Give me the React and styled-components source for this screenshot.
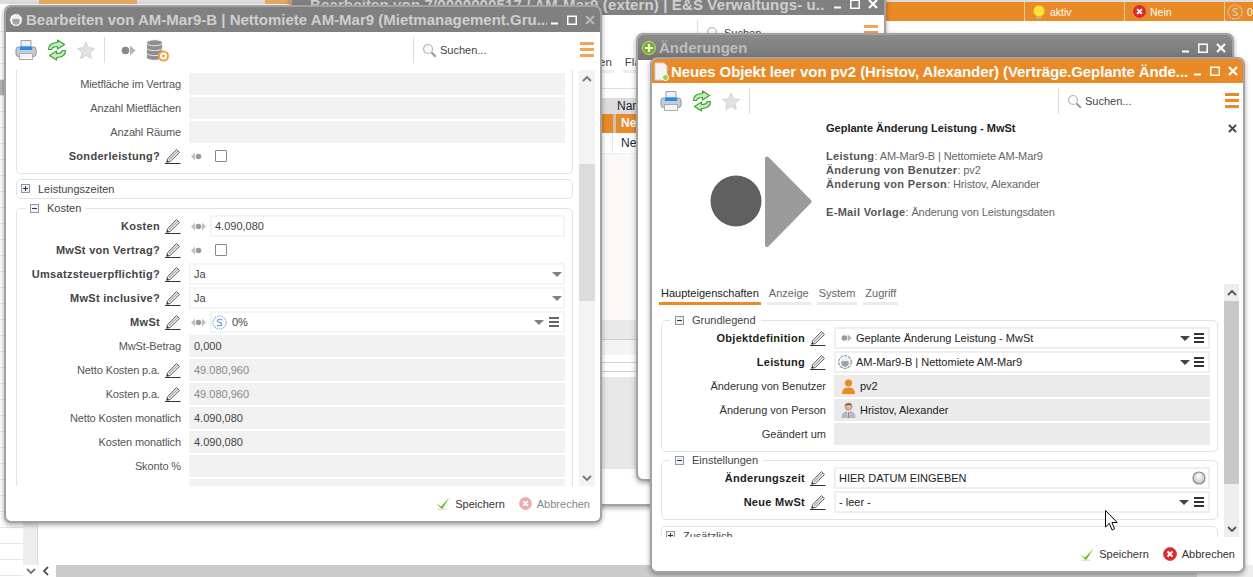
import React from "react";
import styled, { createGlobalStyle } from "styled-components";

const Global = createGlobalStyle`
  html, body { margin: 0; padding: 0; background: #fff; overflow: hidden; }
  * { box-sizing: border-box; }
  svg { flex: none; display: block; }
  body { font-family: "Liberation Sans", Arial, sans-serif; font-size: 11px; }
`;

const ORANGE = "#e98a26";

const Desktop = styled.div`
  position: relative; width: 1253px; height: 577px; overflow: hidden; background: #fff;
`;

/* ---------- page behind the windows ---------- */
const Backdrop = styled.div`display: flex; flex-direction: column; width: 100%; height: 100%;`;
const TopBand = styled.div`display: flex; height: 21px; flex: none;`;
const TopTab = styled.div`
  width: ${p => p.$w}px; flex: none; height: ${p => p.$h || 4}px; background: ${p => p.$bg};
`;
const StatusBar = styled.div`
  flex: 1; height: 19px; margin-top: 2px; background: ${ORANGE}; display: flex; padding-left: 138px;
  box-shadow: 0 -2px 0 #ddd;
`;
const StatusCell = styled.div`
  width: 100px; flex: none; border-left: 1px solid #f6cfa3; display: flex; align-items: center;
  gap: ${p => p.$gap ?? 5}px; padding-left: ${p => p.$pl ?? 8}px; color: #fff; font-size: 10.5px; white-space: nowrap; overflow: hidden;
`;
const MainRow = styled.div`flex: 1; display: flex; min-height: 0;`;
const LeftRail = styled.div`width: 23px; flex: none; overflow: hidden;`;
const RailRow = styled.div`
  height: 16px; border-bottom: 1px solid #e6e6e6; background: ${p => (p.$on ? "#b5b5b5" : "#fff")};
  &:first-child { height: 11px; }
`;
const Strip = styled.div`width: 15px; flex: none; display: flex; flex-direction: column;`;
const StripFill = styled.div`flex: 1; background: #eee; border-right: 1px solid #ddd;`;
const ChevSlot = styled.div`height: 12px; flex: none; display: flex; align-items: center; justify-content: center;`;
const Content = styled.div`flex: 1; display: flex; flex-direction: column; min-width: 0;`;
const ContentFill = styled.div`flex: 1;`;
const HScroll = styled.div`height: 12px; flex: none; display: flex; align-items: center;`;
const HChev = styled.div`width: 18px; flex: none; display: flex; justify-content: center;`;
const HThumb = styled.div`flex: 1; height: 100%; background: #ccc;`;
const HEnd = styled.div`width: 56px; flex: none; height: 100%; background: #eee;`;

/* ---------- windows ---------- */
const Win = styled.section`
  position: absolute; left: ${p => p.$x}px; top: ${p => p.$y}px; width: ${p => p.$w}px; height: ${p => p.$h}px;
  background: #fff; border: 2px solid #a3a3a3; border-radius: 7px; overflow: hidden;
  box-shadow: 0 2px 5px rgba(0,0,0,.35);
  display: flex; flex-direction: column;
  --lbl: ${p => (p.$active ? "#333" : "#555")};
  --lblsp: ${p => (p.$active ? "0" : "-.12px")};
  --strong: ${p => (p.$active ? "#1c1c1c" : "#444")};
  --ro: ${p => (p.$active ? "#ebebeb" : "#f2f2f2")};
  --edge: ${p => (p.$active ? "#efefef" : "#f4f4f4")};
  --val: ${p => (p.$active ? "#222" : "#444")};
  --tri: ${p => (p.$active ? "#444" : "#808080")};
  --bars: ${p => (p.$active ? "#333" : "#666")};
  --menu: ${p => (p.$active ? ORANGE : "#f0a55a")};
  --track: ${p => (p.$active ? "#eee" : "#f3f3f3")};
  --thumb: ${p => (p.$active ? "#c8c8c8" : "#dcdcdc")};
`;
const Title = styled.header`
  height: ${p => p.$h}px; flex: none; display: flex; align-items: center; gap: ${p => p.$gap || 3}px;
  padding: 0 ${p => p.$right || 3}px 0 ${p => p.$left || 3}px;
  background: ${p => p.$bg || "#808080"};
`;
const TitleText = styled.h1`
  flex: 1; min-width: 0; margin: 0; font-size: 15px; font-weight: 700; white-space: nowrap; overflow: hidden;
  letter-spacing: ${p => p.$sp ?? 0}px; color: ${p => p.$color || "#cfcfcf"};
`;
const Controls = styled.div`display: flex; align-items: center; gap: 8px; flex: none;`;
const Toolbar = styled.div`
  height: ${p => p.$h}px; flex: none; display: flex; align-items: flex-start; padding: 5px ${p => p.$right}px 0 ${p => p.$left}px;
`;
const ToolGroup = styled.div`height: 26px; display: flex; align-items: center; gap: 10px; flex: none;`;
const VSep = styled.div`width: 1px; height: 26px; background: #ddd; margin: 0 6px 0 -1px;`;
const SearchBox = styled.div`
  margin-left: auto; width: 167px; height: 26px; flex: none; border-left: 1px solid #ddd; display: flex;
  align-items: center; gap: 3px; padding-left: 8px; color: #444; font-size: 11px;
`;
const MenuBtn = styled.div`
  width: 14px; height: 15px; margin-top: 5px; flex: none; display: flex; flex-direction: column; justify-content: space-between;
  & > i { display: block; height: 3px; background: var(--menu); }
`;

/* ---------- form ---------- */
const Body = styled.div`flex: 1; min-height: 0; display: flex;`;
const FormArea = styled.div`flex: 1; min-width: 0; overflow: hidden; padding-left: ${p => p.$pad}px;`;
const Group = styled.fieldset`
  width: 557px; min-width: 0; margin: ${p => (p.$gap ?? 2)}px 0 0; padding: 0 0 4px; border: 1px solid #e2e2e2; border-radius: 5px;
  ${p => p.$open && `border-top: 0; border-top-left-radius: 0; border-top-right-radius: 0; padding-top: 3px; margin-top: 0;`}
`;
const Legend = styled.legend`
  margin-left: 8px; padding: 0 5px; height: 14px; display: flex; align-items: center; gap: 8px; color: #444; font-size: 11px; line-height: 14px;
`;
const Collapsed = styled.div`
  width: 557px; height: 20px; margin-top: ${p => p.$gap}px; border: 1px solid #e2e2e2; border-radius: 5px; display: flex;
  align-items: center; gap: 8px; padding: 0 0 1px 4px; color: #444; font-size: 11px;
`;
const ToggleBox = styled.span`
  width: 9px; height: 9px; flex: none; border: 1px solid #8a97a5; background: #eef2f6; position: relative;
  &::before { content: ""; position: absolute; left: 1px; right: 1px; top: 3px; height: 1px; background: #333; }
  ${p => p.$plus && `&::after { content: ""; position: absolute; top: 1px; bottom: 1px; left: 3px; width: 1px; background: #333; }`}
`;
const RowGrid = styled.div`
  display: grid; grid-template-columns: 164px 376px; column-gap: 8px; height: 22px; margin-bottom: 2px;
`;
const LabelCell = styled.div`display: flex; align-items: center; justify-content: flex-end; gap: 5px; min-width: 0;`;
const LabelText = styled.label`
  white-space: nowrap; font-size: 11px; font-weight: ${p => (p.$strong ? 700 : 400)};
  color: ${p => (p.$strong ? "var(--strong)" : "var(--lbl)")};
  letter-spacing: ${p => (p.$strong ? ".3px" : "var(--lblsp)")};
`;
const ValueCell = styled.div`display: flex; align-items: center; min-width: 0;`;
const SyncSlot = styled.div`width: 21px; flex: none; display: flex; padding-left: 2px;`;
const Field = styled.div`
  flex: 1; min-width: 0; height: 22px; display: flex; align-items: center; gap: ${p => p.$gap ?? 5}px;
  padding: 0 ${p => p.$pr ?? 5}px 0 ${p => p.$pl ?? 3}px; font-size: 11px; color: ${p => p.$dim ? "#888" : "var(--val)"};
  background: ${p => (p.$ro ? "var(--ro)" : "#fff")};
  border: 2px solid ${p => (p.$ro ? "var(--ro)" : "var(--edge)")};
`;
const FieldText = styled.span`flex: 1; min-width: 0; white-space: nowrap;`;
const Tri = styled.i`
  width: 0; height: 0; flex: none; border: 5px solid transparent; border-bottom: 0; border-top: 5px solid var(--tri);
`;
const Bars = styled.div`
  width: 10px; height: 10px; flex: none; display: flex; flex-direction: column; justify-content: space-between;
  & > i { display: block; height: 2px; background: var(--bars); }
`;
const Check = styled.span`
  width: 12px; height: 12px; margin-left: 5px; flex: none; display: block; background: #fff; border: 1px solid #888; border-radius: 1px;
`;
const Scroll = styled.div`
  width: ${p => p.$w}px; margin-right: ${p => p.$mr}px; flex: none; background: var(--track); display: flex; flex-direction: column;
`;
const ScrollChev = styled.div`height: 17px; flex: none; display: flex; align-items: center; justify-content: center;`;
const Thumb = styled.div`height: ${p => p.$h}px; margin-top: ${p => p.$top}px; flex: none; background: var(--thumb);`;
const ScrollFill = styled.div`flex: 1;`;
const Footer = styled.footer`
  height: ${p => p.$h}px; flex: none; display: flex; align-items: center; justify-content: flex-end; gap: 14px; padding-right: ${p => p.$right}px;
`;
const FootBtn = styled.button`
  all: unset; display: flex; align-items: center; gap: 5px; font-size: 11px; color: ${p => p.$dim ? "#888" : "#333"};
`;

/* ---------- detail header of the front window ---------- */
const Detail = styled.div`height: 169px; flex: none; display: flex;`;
const DetailIcon = styled.div`width: 174px; flex: none; padding: 41px 0 0 58px;`;
const DetailText = styled.div`flex: 1; min-width: 0; padding: 6px 6px 0 0; font-size: 11px; line-height: 14px; color: #666; letter-spacing: -.1px;`;
const DetailHead = styled.div`display: flex; justify-content: space-between; align-items: center; margin-bottom: 14px;`;
const DetailTitle = styled.h2`margin: 0; font-size: 11px; font-weight: 700; color: #222; line-height: 14px; letter-spacing: 0;`;
const InfoLine = styled.div`min-height: 14px;`;
const InfoKey = styled.b`color: #555; letter-spacing: .32px;`;
const Tabs = styled.nav`display: flex; gap: 6px; margin-left: -2px; height: 21px;`;
const Tab = styled.div`
  padding: 0 2px; height: 21px; line-height: 18px; font-size: 11px; border-bottom: 3px solid ${p => (p.$on ? ORANGE : "#ebebeb")};
  color: ${p => (p.$on ? "#222" : "#666")}; white-space: nowrap;
`;
const FormTop = styled.div`height: 8px;`;

/* ---------- inside of the rear window ---------- */
const RearTabs = styled.div`height: 20px; flex: none; display: flex; gap: 9px; margin-left: 282px;`;
const RearTab = styled.div`
  padding: 0 2px; height: 20px; line-height: 18px; font-size: 11.5px; color: #444; border-bottom: 3px solid #eee; white-space: nowrap;
`;
const Band = styled.div`
  height: ${p => p.$h}px; flex: none; background: ${p => p.$bg || "#fff"};
  ${p => p.$line && `border-bottom: 1px solid ${p.$line};`}
`;
const TableRow = styled.div`
  height: ${p => p.$h}px; flex: none; display: grid; grid-template-columns: 321px 3px 1fr; background: ${p => p.$bg};
  ${p => p.$line && `border-bottom: 1px solid ${p.$line};`}
`;
const Cell = styled.div`
  background: ${p => p.$bg || "transparent"}; color: ${p => p.$color || "#223"}; font-size: 12px; padding-left: ${p => p.$pl || 0}px;
  line-height: ${p => p.$lh || 16}px; white-space: nowrap; overflow: hidden; border-right: ${p => p.$rule ? "1px solid #e6e6e6" : "0"};
`;
const Cursor = styled.svg`position: absolute; left: 1105px; top: 510px;`;

/* ---------- icons ---------- */
const Printer = () => (
  <svg width="22" height="22" viewBox="0 0 22 22">
    <path d="M6 1.500h10v8H6z" fill="#eef1f4" stroke="#9aa3ac" />
    <rect x="1" y="8" width="20" height="9.500" rx="2.500" fill="#c6ccd3" stroke="#8b939b" />
    <path d="M5.500 7.500h11l1 3.500h-13z" fill="#1c8ff0" />
    <path d="M4.500 14.500h13v6h-13z" fill="#f4f6f8" stroke="#a4acb4" />
  </svg>
);
const Refresh = () => (
  <svg width="20" height="22" viewBox="0 0 20 22">
    <g fill="#c6edb8" stroke="#3aa23a" strokeWidth="1.200" strokeLinejoin="round">
      <path d="M1.500 10.500C1.500 6 5 3.500 10.500 3.500V1l7 4.500-7 4.500V7.500C7 7.500 5 8.500 4.500 10.500z" />
      <path d="M18.500 11.500C18.500 16 15 18.500 9.500 18.500V21l-7-4.500 7-4.500v2.500c3.500 0 5.500-1 6-3z" />
    </g>
  </svg>
);
const Star = () => (
  <svg width="18" height="19" viewBox="0 0 18 19">
    <path d="M9 1l2.500 5.800 6 .6-4.500 4.100 1.300 6L9 14.400 3.700 17.500 5 11.500.5 7.400l6-.6z" fill="#e2e2e2" stroke="#d2d2d2" />
  </svg>
);
const DotArrow = ({ w = 15, h = 11, c = "#888" }) => (
  <svg width={w} height={h} viewBox="0 0 15 11">
    <circle cx="4.500" cy="5.500" r="3.800" fill={c} />
    <path d="M9 .5l5.500 5-5.500 5z" fill="#b5b5b5" />
  </svg>
);
const Database = () => (
  <svg width="23" height="23" viewBox="0 0 23 23">
    <g fill="#8f8f8f" stroke="#fff" strokeWidth=".8">
      <path d="M0.500 14.500v4c0 1.600 3.500 2.800 8 2.800s8-1.200 8-2.800v-4z" />
      <path d="M0.500 9v4.800c0 1.600 3.500 2.800 8 2.800s8-1.200 8-2.800V9z" />
      <path d="M0.500 4v4.800c0 1.600 3.500 2.800 8 2.800s8-1.200 8-2.800V4z" />
      <ellipse cx="8.500" cy="3.800" rx="8" ry="3" />
    </g>
    <circle cx="17.500" cy="17" r="4.500" fill="#fff" stroke="#f0a040" strokeWidth="2" />
    <circle cx="17.500" cy="17" r="1.500" fill="#f0a040" />
  </svg>
);
const Lens = () => (
  <svg width="15" height="15" viewBox="0 0 15 15">
    <circle cx="6" cy="6" r="4.500" fill="#fafafa" stroke="#b8b8b8" strokeWidth="1.200" />
    <path d="M9.500 9.500l4.300 4.300" stroke="#999" strokeWidth="2" />
  </svg>
);
const Pencil = () => (
  <svg width="16" height="16" viewBox="0 0 16 16">
    <path d="M2.500 10.800L11.500 1.500 14.500 4.500 5.200 13.600 1.700 14.300z" fill="#e6e6e6" stroke="#555" strokeWidth=".9" strokeLinejoin="round" />
    <path d="M4 11.800L12.800 3.100" stroke="#9a9a9a" strokeWidth="1" />
    <path d="M1.700 14.300l.5-2.300 1.800 1.800z" fill="#333" />
    <path d="M0 15.500h15.500" stroke="#333" strokeWidth="1" />
  </svg>
);
const Sync = ({ both = true }) => (
  <svg width="15" height="9" viewBox="0 0 15 9">
    <path d="M4 .5v8L0 4.500z" fill="#c0c0c0" />
    <circle cx="7.500" cy="4.500" r="2.800" fill="#9a9a9a" />
    {both && <path d="M11 .5v8l4-4z" fill="#c0c0c0" />}
  </svg>
);
const Chev = ({ dir = "up", c = "#777" }) => {
  const d = { up: "M1 6l4-4 4 4", down: "M1 2l4 4 4-4", left: "M6 1L2 5l4 4" }[dir];
  return (
    <svg width="10" height={dir === "left" ? 10 : 8} viewBox={dir === "left" ? "0 0 10 10" : "0 0 10 8"}>
      <path d={d} fill="none" stroke={c} strokeWidth="1.800" />
    </svg>
  );
};
const Cross = ({ c = "#fff", s = 10 }) => (
  <svg width={s} height={s} viewBox="0 0 10 10"><path d="M1 1l8 8M9 1L1 9" stroke={c} strokeWidth="2.200" /></svg>
);
const Min = ({ c = "#fff" }) => (<svg width="9" height="10" viewBox="0 0 9 10"><path d="M1 8.500h7" stroke={c} strokeWidth="2" /></svg>);
const Max = ({ c = "#fff" }) => (<svg width="10" height="10" viewBox="0 0 10 10"><rect x=".75" y="1.250" width="8.500" height="8" fill="none" stroke={c} strokeWidth="1.500" /></svg>);
const WinControls = ({ x = "#fff" }) => (
  <Controls><Min /><Max /><Cross c={x} /></Controls>
);
const Service = ({ s = 14 }) => (
  <svg width={s} height={s} viewBox="0 0 14 14">
    <circle cx="7" cy="7" r="6.300" fill="#fff" stroke="#909090" strokeWidth="1.200" strokeDasharray="3 1" />
    <circle cx="7" cy="8" r="3.800" fill="#9aa6ad" />
    <path d="M3 6a4 4 0 0 1 8 0z" fill="#e8f0f4" />
  </svg>
);
const Doc = () => (
  <svg width="15" height="19" viewBox="0 0 15 19">
    <path d="M1 1h9l3 3v14H1z" fill="#f4f4f4" stroke="#d0d0d0" />
    <circle cx="11.500" cy="15.500" r="3" fill="#9ad04a" stroke="#fff" />
  </svg>
);
const GreenPlus = () => (
  <svg width="14" height="14" viewBox="0 0 14 14">
    <circle cx="7" cy="7" r="6.500" fill="#74b21a" stroke="#d8e8a8" strokeWidth=".8" />
    <path d="M7 3v8M3 7h8" stroke="#fff" strokeWidth="2.200" />
  </svg>
);
const Bulb = () => (
  <svg width="12" height="14" viewBox="0 0 12 14">
    <circle cx="6" cy="6" r="5.500" fill="#ffe23c" stroke="#d8c020" strokeWidth=".6" />
    <rect x="3.500" y="11" width="5" height="2.500" fill="#c8b878" />
  </svg>
);
const RedX = ({ s = 14, dim }) => (
  <svg width={s} height={s} viewBox="0 0 14 14" opacity={dim ? .4 : 1}>
    <circle cx="7" cy="7" r="6.500" fill="#e22a2e" stroke="#c01c20" strokeWidth=".6" />
    <path d="M4.500 4.500l5 5M9.500 4.500l-5 5" stroke="#fff" strokeWidth="2" />
  </svg>
);
const Dollar = ({ s = 16, c = "#8fb8e0", t = "#6a9fd4", bg = "#fff" }) => (
  <svg width={s} height={s} viewBox="0 0 16 16">
    <circle cx="8" cy="8" r="7" fill={bg} stroke={c} strokeWidth="1.400" strokeDasharray="1.500 1" />
    <path d="M10.500 5.500C10 4.300 6 4 5.800 6c0 2.300 4.600 1.500 4.600 4 0 1.900-4 1.800-4.800.5" fill="none" stroke={t} strokeWidth="1.300" />
  </svg>
);
const Tick = () => (
  <svg width="14" height="13" viewBox="0 0 14 13">
    <path d="M.5 6.500L5 9.500 13.500 .5 6 12.500z" fill="#6ec02a" />
    <ellipse cx="6" cy="12.300" rx="5" ry=".7" fill="#ddd" />
  </svg>
);
const Person = () => (
  <svg width="15" height="15" viewBox="0 0 15 15">
    <circle cx="7.500" cy="4" r="3.600" fill="#ee8a1c" />
    <path d="M1 15c0-4.500 2.500-6.500 6.500-6.500S14 10.500 14 15z" fill="#ee8a1c" />
  </svg>
);
const Suit = () => (
  <svg width="15" height="16" viewBox="0 0 15 16">
    <circle cx="7.500" cy="4.500" r="3.500" fill="#e8b890" stroke="#8a6a48" strokeWidth=".6" />
    <path d="M4 3.500C4.500 1 10.500 .5 11 3.500 9 2.800 6 2.800 4 3.500z" fill="#7a5a3a" />
    <path d="M.5 16c0-5 2.500-7 7-7s7 2 7 7z" fill="#a9bdd0" />
    <path d="M6.500 9h2l.5 7H6z" fill="#e8eef4" />
    <path d="M7 10h1l.6 6H6.500z" fill="#d06a6a" />
  </svg>
);
const Clock = () => (
  <svg width="14" height="14" viewBox="0 0 14 14">
    <defs><radialGradient id="clk" cx=".5" cy=".35"><stop offset="0" stopColor="#fff" /><stop offset="1" stopColor="#ccc" /></radialGradient></defs>
    <circle cx="7" cy="7" r="6" fill="url(#clk)" stroke="#888" strokeWidth="1.200" />
  </svg>
);
const BigIcon = () => (
  <svg width="102" height="92" viewBox="0 0 102 92">
    <circle cx="26" cy="45" r="25.500" fill="#606060" />
    <path d="M57 2.500L99.500 45.500 57 89z" fill="#9b9b9b" stroke="#9b9b9b" strokeWidth="4" strokeLinejoin="round" />
  </svg>
);

/* ---------- composites ---------- */
const Row = ({ label, strong, edit, children }) => (
  <RowGrid>
    <LabelCell>
      <LabelText $strong={strong}>{label}</LabelText>
      {edit && <Pencil />}
    </LabelCell>
    <ValueCell>{children}</ValueCell>
  </RowGrid>
);
const Menu = () => <MenuBtn><i /><i /><i /></MenuBtn>;
const MoreBars = () => <Bars><i /><i /><i /></Bars>;
const Search = () => <SearchBox><Lens />Suchen...</SearchBox>;
const Tools = ({ extra }) => (
  <ToolGroup>
    <Printer /><Refresh /><Star />
    <VSep />
    {extra}
  </ToolGroup>
);

const App = () => (
  <Desktop>
    <Global />
    <Backdrop>
      <TopBand>
        <TopTab $w={39} $bg="#ddd" />
        <TopTab $w={98} $bg="#e9a860" />
        <TopTab $w={128} $bg="#ddd" />
        <TopTab $w={25} $bg="#e9a860" />
        <TopTab $w={596} $bg="#fff" />
        <StatusBar>
          <StatusCell><Bulb />aktiv</StatusCell>
          <StatusCell $gap={4}><RedX s={13} />Nein</StatusCell>
          <StatusCell $pl={2} $gap={4}><Dollar s={16} c="#d8cdbd" t="#d8cdbd" bg={ORANGE} />0%</StatusCell>
        </StatusBar>
      </TopBand>
      <MainRow>
        <LeftRail>
          {Array.from({ length: 36 }, (_, i) => <RailRow key={i} $on={i === 4} />)}
        </LeftRail>
        <Strip>
          <StripFill />
          <ChevSlot><Chev dir="down" /></ChevSlot>
        </Strip>
        <Content>
          <ContentFill />
          <HScroll>
            <HChev><Chev dir="left" c="#555" /></HChev>
            <HThumb />
            <HEnd />
          </HScroll>
        </Content>
      </MainRow>
    </Backdrop>

    {/* rear window */}
    <Win $x={290} $y={-9} $w={596} $h={515}>
      <Title $h={22} $left={18} $right={6} $gap={8}>
        <TitleText $sp={.13}>Bearbeiten von 7/0000000517 / AM-Mar9 (extern) | E&amp;S Verwaltungs- u...</TitleText>
        <WinControls />
      </Title>
      <Toolbar $h={38} $left={9} $right={6}>
        <Search /><Menu />
      </Toolbar>
      <RearTabs>
        <RearTab>Kosten</RearTab>
        <RearTab>Flächen</RearTab>
      </RearTabs>
      <Band $h={16} $line="#ddd" />
      <Band $h={9} />
      <TableRow $h={16} $bg="#dcdcdc">
        <Cell /><Cell /><Cell $pl={1}>Name</Cell>
      </TableRow>
      <TableRow $h={19} $bg="#c4c4c4">
        <Cell $bg={ORANGE} /><Cell /><Cell $bg={ORANGE} $color="#fff" $pl={5} $lh={19}><b>Nettomiete</b></Cell>
      </TableRow>
      <TableRow $h={21} $bg="#fff" $line="#eee">
        <Cell $rule /><Cell /><Cell $pl={5} $lh={20}>Nettomiete</Cell>
      </TableRow>
      <Band $h={166} $bg="#faf9f7" />
      <Band $h={20} $bg="#e9e9e9" $line="#ccc" />
      <Band $h={15} $bg="#f6f4f2" />
      <Band $h={8} $line="#d0d0d0" />
      <Band $h={9} $line="#d0d0d0" />
      <Band $h={5} />
      <Band $h={92} $bg="#e7e7e7" />
    </Win>

    {/* changes list window */}
    <Win $x={636} $y={33} $w={598} $h={448}>
      <Title $h={25} $bg="linear-gradient(#8b8b8b,#767676)" $left={4} $right={6} $gap={3}>
        <GreenPlus />
        <TitleText $color="#bdbdbd">Änderungen</TitleText>
        <WinControls />
      </Title>
    </Win>

    {/* left edit window */}
    <Win $x={4} $y={5} $w={598} $h={518}>
      <Title $h={25} $left={3} $right={5} $gap={3}>
        <Service />
        <TitleText>Bearbeiten von AM-Mar9-B | Nettomiete AM-Mar9 (Mietmanagement.Gru...</TitleText>
        <WinControls x="#b5b5b5" />
      </Title>
      <Toolbar $h={38} $left={9} $right={6}>
        <Tools extra={<><DotArrow /><Database /></>} />
        <Search /><Menu />
      </Toolbar>
      <Body>
        <FormArea $pad={10}>
          <Group $open>
            <Row label="Mietfläche im Vertrag"><Field $ro /></Row>
            <Row label="Anzahl Mietflächen"><Field $ro /></Row>
            <Row label="Anzahl Räume"><Field $ro /></Row>
            <Row label="Sonderleistung?" strong edit><SyncSlot><Sync both={false} /></SyncSlot><Check /></Row>
          </Group>
          <Collapsed $gap={5}><ToggleBox $plus />Leistungszeiten</Collapsed>
          <Group>
            <Legend><ToggleBox />Kosten</Legend>
            <Row label="Kosten" strong edit><SyncSlot><Sync /></SyncSlot><Field><FieldText>4.090,080</FieldText></Field></Row>
            <Row label="MwSt von Vertrag?" strong edit><SyncSlot><Sync both={false} /></SyncSlot><Check /></Row>
            <Row label="Umsatzsteuerpflichtig?" strong edit><Field $pr={1}><FieldText>Ja</FieldText><Tri /></Field></Row>
            <Row label="MwSt inclusive?" strong edit><Field $pr={1}><FieldText>Ja</FieldText><Tri /></Field></Row>
            <Row label="MwSt" strong edit>
              <SyncSlot><Sync /></SyncSlot>
              <Field $pl={0} $pr={4}><Dollar s={15} /><FieldText>0%</FieldText><Tri /><MoreBars /></Field>
            </Row>
            <Row label="MwSt-Betrag"><Field $ro>0,000</Field></Row>
            <Row label="Netto Kosten p.a." edit><Field $ro $dim>49.080,960</Field></Row>
            <Row label="Kosten p.a." edit><Field $ro $dim>49.080,960</Field></Row>
            <Row label="Netto Kosten monatlich"><Field $ro>4.090,080</Field></Row>
            <Row label="Kosten monatlich"><Field $ro>4.090,080</Field></Row>
            <Row label="Skonto %"><Field $ro /></Row>
            <Row label="Skonto Tage"><Field $ro /></Row>
          </Group>
        </FormArea>
        <Scroll $w={16} $mr={5}>
          <ScrollChev><Chev dir="up" /></ScrollChev>
          <Thumb $top={77} $h={137} />
          <ScrollFill />
          <ScrollChev><Chev dir="down" /></ScrollChev>
        </Scroll>
      </Body>
      <Footer $h={35} $right={10}>
        <FootBtn><Tick />Speichern</FootBtn>
        <FootBtn $dim><RedX s={13} dim />Abbrechen</FootBtn>
      </Footer>
    </Win>

    {/* front window */}
    <Win $x={650} $y={57} $w={595} $h={516} $active>
      <Title $h={24} $bg={ORANGE} $left={2} $right={5} $gap={2}>
        <Doc />
        <TitleText $color="#fff" $sp={-.1}>Neues Objekt leer von pv2 (Hristov, Alexander) (Verträge.Geplante Ände...</TitleText>
        <WinControls />
      </Title>
      <Toolbar $h={32} $left={8} $right={4}>
        <Tools />
        <Search /><Menu />
      </Toolbar>
      <Detail>
        <DetailIcon><BigIcon /></DetailIcon>
        <DetailText>
          <DetailHead>
            <DetailTitle>Geplante Änderung Leistung - MwSt</DetailTitle>
            <Cross c="#444" s={9} />
          </DetailHead>
          <InfoLine><InfoKey>Leistung</InfoKey>: AM-Mar9-B | Nettomiete AM-Mar9</InfoLine>
          <InfoLine><InfoKey>Änderung von Benutzer</InfoKey>: pv2</InfoLine>
          <InfoLine><InfoKey>Änderung von Person</InfoKey>: Hristov, Alexander</InfoLine>
          <InfoLine />
          <InfoLine><InfoKey>E-Mail Vorlage</InfoKey>: Änderung von Leistungsdaten</InfoLine>
        </DetailText>
      </Detail>
      <Body>
        <FormArea $pad={9}>
          <Tabs>
            <Tab $on>Haupteigenschaften</Tab>
            <Tab>Anzeige</Tab>
            <Tab>System</Tab>
            <Tab>Zugriff</Tab>
          </Tabs>
          <FormTop />
          <Group $gap={0}>
            <Legend><ToggleBox />Grundlegend</Legend>
            <Row label="Objektdefinition" strong edit>
              <Field $pl={5} $pr={4} $gap={4}><DotArrow w={11} h={8} c="#999" /><FieldText>Geplante Änderung Leistung - MwSt</FieldText><Tri /><MoreBars /></Field>
            </Row>
            <Row label="Leistung" strong edit>
              <Field $pl={2} $pr={4} $gap={4}><Service /><FieldText>AM-Mar9-B | Nettomiete AM-Mar9</FieldText><Tri /><MoreBars /></Field>
            </Row>
            <Row label="Änderung von Benutzer"><Field $ro $pl={5} $gap={4}><Person /><FieldText>pv2</FieldText></Field></Row>
            <Row label="Änderung von Person"><Field $ro $pl={5} $gap={4}><Suit /><FieldText>Hristov, Alexander</FieldText></Field></Row>
            <Row label="Geändert um"><Field $ro /></Row>
          </Group>
          <Group $gap={1}>
            <Legend><ToggleBox />Einstellungen</Legend>
            <Row label="Änderungszeit" strong edit>
              <Field $pr={2}><FieldText>HIER DATUM EINGEBEN</FieldText><Clock /></Field>
            </Row>
            <Row label="Neue MwSt" strong edit>
              <Field $pr={4}><FieldText>- leer -</FieldText><Tri /><MoreBars /></Field>
            </Row>
          </Group>
          <Collapsed $gap={6}><ToggleBox $plus />Zusätzlich</Collapsed>
        </FormArea>
        <Scroll $w={15} $mr={4}>
          <ScrollChev><Chev dir="up" c="#555" /></ScrollChev>
          <Thumb $top={0} $h={183} />
          <ScrollFill />
          <ScrollChev><Chev dir="down" c="#555" /></ScrollChev>
        </Scroll>
      </Body>
      <Footer $h={34} $right={8}>
        <FootBtn><Tick />Speichern</FootBtn>
        <FootBtn><RedX />Abbrechen</FootBtn>
      </Footer>
    </Win>

    <Cursor width="13" height="22" viewBox="0 0 13 22">
      <path d="M.5.500v16.500l3.800-3.600 2.700 6.500 2.600-1.100-2.700-6.300h5.300z" fill="#fff" stroke="#000" />
    </Cursor>
  </Desktop>
);

export default App;
